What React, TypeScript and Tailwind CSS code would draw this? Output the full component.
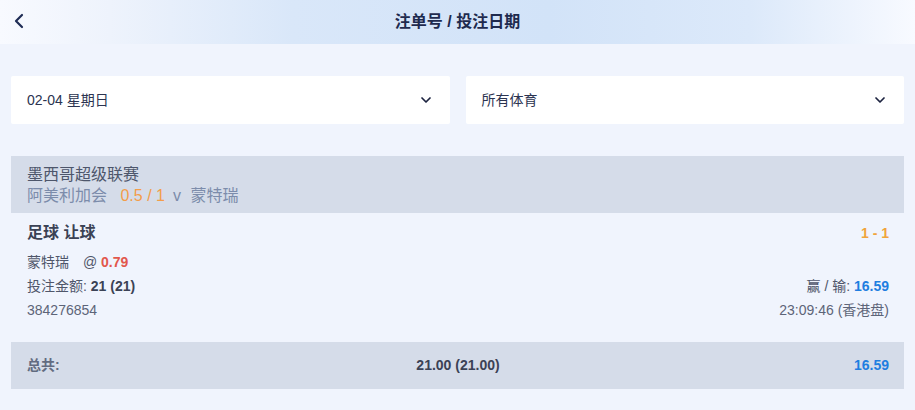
import { ChevronLeft, ChevronDown } from 'lucide-react';

const font = { fontFamily: '"Liberation Sans", Arial, "Noto Sans CJK SC", sans-serif' };

function Select({ label }: { label: string }) {
  return (
    <div className="flex-1 h-[48px] bg-white rounded-[2px] flex items-center justify-between pl-[16px] pr-[16px]">
      <span className="text-[14px] text-[#2b3350]">{label}</span>
      <ChevronDown size={16} strokeWidth={2.6} className="text-[#1c2340]" />
    </div>
  );
}

export default function App() {
  return (
    <div className="w-[915px] h-[410px] bg-[#f0f4fd] overflow-hidden" style={font}>
      <div className="h-[44px] relative flex items-center justify-center bg-[linear-gradient(to_right,#f8faff_0%,#eef3fc_12%,#d9e7f9_32%,#d2e3f8_60%,#dce9fa_82%,#f8faff_100%)]">
        <ChevronLeft size={24} strokeWidth={2.2} className="absolute left-[7px] top-[9px] text-[#1f2c55]" />
        <span className="text-[16px] font-bold text-[#1e2a4e]">注单号 / 投注日期</span>
      </div>

      <div className="flex gap-[16px] px-[11px] mt-[32px]">
        <Select label="02-04 星期日" />
        <Select label="所有体育" />
      </div>

      <div className="mx-[11px] mt-[32px]">
        <div className="h-[57px] bg-[#d5dce9] pl-[16px] pt-[8px] leading-[21px] text-[16px]">
          <div className="text-[#4d566b]">墨西哥超级联赛</div>
          <div className="text-[#7c8cab]">
            阿美利加会 <span className="ml-[9px] text-[#f39d4a]">0.5 / 1</span>
            <span className="ml-[8px]">v</span> <span className="ml-[5px]">蒙特瑞</span>
          </div>
        </div>
        <div className="flex justify-between pl-[16px] pr-[15px] pt-[9px]">
          <div className="flex flex-col">
            <div className="text-[16px] font-bold text-[#3b4255] leading-[22px]">足球 让球</div>
            <div className="text-[14px] text-[#4f566a] leading-[24px] mt-[6px]">
              蒙特瑞 <span className="ml-[10px]">@</span>{' '}
              <span className="font-bold text-[#e2574c]">0.79</span>
            </div>
            <div className="text-[14px] text-[#4f566a] leading-[24px]">
              投注金额: <span className="font-bold text-[#3b4255]">21 (21)</span>
            </div>
            <div className="text-[14px] text-[#5d6478] leading-[24px]">384276854</div>
          </div>
          <div className="flex flex-col items-end">
            <div className="text-[14px] font-bold text-[#f0a43c] leading-[22px]">1 - 1</div>
            <div className="h-[30px]" />
            <div className="text-[14px] text-[#4f566a] leading-[24px]">
              赢 / 输: <span className="font-bold text-[#1f7ee0]">16.59</span>
            </div>
            <div className="text-[14px] text-[#5d6478] leading-[24px]">23:09:46 (香港盘)</div>
          </div>
        </div>
      </div>

      <div className="mx-[11px] mt-[20px] h-[47px] bg-[#d5dce9] flex items-center justify-between pl-[16px] pr-[15px] text-[14px] font-bold">
        <span className="w-[120px] text-[#626b80]">总共:</span>
        <span className="text-[#3b4255]">21.00 (21.00)</span>
        <span className="w-[120px] text-right text-[#1f7ee0]">16.59</span>
      </div>
    </div>
  );
}
